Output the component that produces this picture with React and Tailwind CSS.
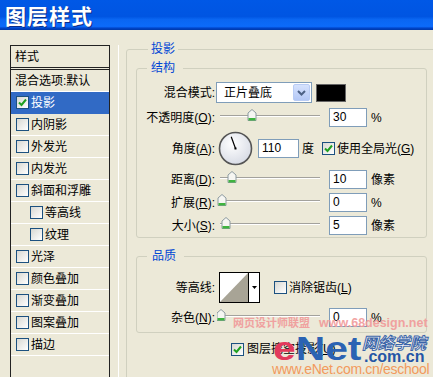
import React from "react";

function Check({ checked }) {
  return (
    <span className="inline-flex w-[13px] h-[13px] shrink-0 border border-[#1C5180] bg-[linear-gradient(135deg,#D8D8D2,#FFFFFF)] items-center justify-center">
      {checked && (
        <svg width="11" height="11" viewBox="0 0 11 11">
          <path d="M2 5.5 L4.5 8 L9 2.5" fill="none" stroke="#21A121" strokeWidth="2" />
        </svg>
      )}
    </span>
  );
}

function Slider({ pos }) {
  return (
    <svg width="104" height="19" viewBox="0 0 104 19" className="shrink-0">
      <line x1="3" y1="7.5" x2="103" y2="7.5" stroke="#A3A29D" strokeWidth="1" />
      <line x1="3" y1="8.5" x2="103" y2="8.5" stroke="#FFFFFF" strokeWidth="1" />
      <g transform={`translate(${pos - 4.5},1)`}>
        <path d="M0.5 4 L4.5 0.5 L8.5 4 V11.5 H0.5 Z" fill="#F6F6F2" stroke="#8C9AA0" />
        <rect x="1" y="9" width="7" height="2.5" fill="#3FB33F" />
      </g>
    </svg>
  );
}

function Input({ value, w = "w-[38px]" }) {
  return (
    <div className={`${w} h-[19px] shrink-0 border border-[#7F9DB9] bg-white pl-[3px] text-[12px] leading-[17px] text-black`}>
      {value}
    </div>
  );
}

function U({ children }) {
  return <span className="underline underline-offset-[1px]">{children}</span>;
}

function Label({ children }) {
  return <div className="w-[78px] shrink-0 text-right whitespace-nowrap">{children}</div>;
}

function Dial() {
  const a = (110 * Math.PI) / 180;
  const ex = 17.5 + 12.5 * Math.cos(a);
  const ey = 17.5 - 12.5 * Math.sin(a);
  return (
    <svg width="35" height="35" viewBox="0 0 35 35" className="shrink-0">
      <defs>
        <radialGradient id="dg" cx="40%" cy="35%" r="70%">
          <stop offset="0%" stopColor="#FFFFFF" />
          <stop offset="100%" stopColor="#D6DAE4" />
        </radialGradient>
      </defs>
      <circle cx="17.5" cy="17.5" r="16" fill="url(#dg)" stroke="#555" strokeWidth="1.6" />
      <line x1="17.5" y1="17.5" x2={ex} y2={ey} stroke="#000" strokeWidth="1.2" />
      <rect x="16.5" y="16.5" width="2" height="2" fill="#000" />
    </svg>
  );
}

const listItems = [
  { t: "投影", sel: true, c: true },
  { t: "内阴影" },
  { t: "外发光" },
  { t: "内发光" },
  { t: "斜面和浮雕" },
  { t: "等高线", sub: true },
  { t: "纹理", sub: true },
  { t: "光泽" },
  { t: "颜色叠加" },
  { t: "渐变叠加" },
  { t: "图案叠加" },
  { t: "描边" },
];

export default function App() {
  return (
    <div className="relative w-[433px] h-[377px] overflow-hidden bg-[#ECE9D8] text-[12px] leading-[16px] text-black font-['Liberation_Sans','Noto_Sans_CJK_SC',sans-serif]">
      {/* title bar */}
      <div className="h-[30px] bg-[linear-gradient(to_bottom,#0058E6_0%,#0055E2_55%,#0A66F2_65%,#0C6BFA_88%,#0044C8_94%,#0038A8_100%)] pl-[5px] flex items-center">
        <span className="text-white text-[21px] leading-[24px] font-bold tracking-[1px] font-['Noto_Sans_CJK_SC',sans-serif] [text-shadow:1px_1px_0_#0A2E8A]">
          图层样式
        </span>
      </div>

      <div className="flex pt-[11px] pl-[10px] h-[347px]">
        {/* left list */}
        <div className="mt-[4px] w-[100px] shrink-0 border-l border-r border-t border-[#222] flex flex-col">
          <div className="h-[22px] pl-[4px] flex items-center border-b border-[#222]">样式</div>
          <div className="h-[2px] border-b border-[#222]" />
          <div className="h-[22px] pl-[4px] flex items-center border-b border-white whitespace-nowrap">
            混合选项:默认
          </div>
          {listItems.map((it) => (
            <div
              key={it.t}
              className={`h-[22px] flex items-center border-b whitespace-nowrap ${
                it.sel ? "bg-[#316AC5] text-white border-[#316AC5]" : "border-white"
              } ${it.sub ? "pl-[19px]" : "pl-[5px]"}`}
            >
              <Check checked={it.c} />
              <span className="ml-[2px]">{it.t}</span>
            </div>
          ))}
        </div>

        {/* right side */}
        <div className="flex-1 flex">
          <div className="mt-[4px] w-[9px] shrink-0 border-r border-white" />
          <div className="pl-[7px]">
            <fieldset className="w-[320px] h-[350px] border border-[#D0D0BF] rounded-[3px] pl-[9px]">
              <legend className="ml-[12px] px-[3px] text-[#0046D5] leading-[16px]">投影</legend>

              <fieldset className="mt-[3px] w-[291px] border border-[#D0D0BF] rounded-[3px] pb-[2px]">
                <legend className="ml-[10px] pl-[4px] pr-[8px] text-[#0046D5] leading-[16px]">结构</legend>
                <div className="pt-[6px] flex flex-col">
                  {/* blend mode */}
                  <div className="flex items-center h-[21px]">
                    <Label>混合模式:</Label>
                    <div className="ml-[1px] w-[96px] h-[21px] border border-[#7F9DB9] bg-white flex items-center justify-between">
                      <span className="pl-[7px]">正片叠底</span>
                      <div className="w-[17px] h-[17px] mr-[1px] rounded-[2px] border border-[#B9CCF5] bg-[linear-gradient(to_bottom,#D6E2FD,#B4C8F6)] flex items-center justify-center">
                        <svg width="9" height="6" viewBox="0 0 9 6">
                          <path d="M1 1 L4.5 4.5 L8 1" fill="none" stroke="#4D6185" strokeWidth="2" />
                        </svg>
                      </div>
                    </div>
                    <div className="ml-[4px] w-[30px] h-[18px] bg-black border border-[#666]" />
                  </div>
                  {/* opacity */}
                  <div className="flex items-center h-[19px] mt-[5px]">
                    <Label>
                      不透明度(<U>O</U>):
                    </Label>
                    <div className="ml-[2px]"><Slider pos={35} /></div>
                    <div className="ml-[8px]"><Input value="30" /></div>
                    <span className="ml-[4px]">%</span>
                  </div>
                  {/* angle */}
                  <div className="flex items-center h-[35px] mt-[4px]">
                    <Label>
                      角度(<U>A</U>):
                    </Label>
                    <div className="ml-[3px]"><Dial /></div>
                    <div className="ml-[5px]"><Input value="110" w="w-[41px]" /></div>
                    <span className="ml-[3px]">度</span>
                    <div className="ml-[8px] flex items-center">
                      <Check checked />
                    </div>
                    <span className="ml-[2px] whitespace-nowrap">
                      使用全局光(<U>G</U>)
                    </span>
                  </div>
                  {/* distance */}
                  <div className="flex items-center h-[19px] mt-[4px]">
                    <Label>
                      距离(<U>D</U>):
                    </Label>
                    <div className="ml-[2px]"><Slider pos={15} /></div>
                    <div className="ml-[8px]"><Input value="10" /></div>
                    <span className="ml-[4px]">像素</span>
                  </div>
                  {/* spread */}
                  <div className="flex items-center h-[19px] mt-[4px]">
                    <Label>
                      扩展(<U>R</U>):
                    </Label>
                    <div className="ml-[2px]"><Slider pos={5} /></div>
                    <div className="ml-[8px]"><Input value="0" /></div>
                    <span className="ml-[4px]">%</span>
                  </div>
                  {/* size */}
                  <div className="flex items-center h-[19px] mt-[4px]">
                    <Label>
                      大小(<U>S</U>):
                    </Label>
                    <div className="ml-[2px]"><Slider pos={9} /></div>
                    <div className="ml-[8px]"><Input value="5" /></div>
                    <span className="ml-[4px]">像素</span>
                  </div>
                </div>
              </fieldset>

              <fieldset className="mt-[10px] w-[291px] border border-[#D0D0BF] rounded-[3px] pb-[5px]">
                <legend className="ml-[10px] pl-[5px] pr-[8px] text-[#0046D5] leading-[16px]">品质</legend>
                <div className="pt-[8px] flex flex-col">
                  <div className="flex items-center h-[31px]">
                    <Label>等高线:</Label>
                    <div className="ml-[4px] w-[41px] h-[31px] border border-black bg-white flex">
                      <svg width="28" height="29" viewBox="0 0 28 29" className="shrink-0">
                        <rect x="0" y="0" width="28" height="29" fill="#FFFFFF" />
                        <path d="M0 29 L28 0 L28 29 Z" fill="#A8A496" />
                      </svg>
                      <div className="flex-1 border-l border-black flex items-center justify-center">
                        <svg width="5" height="3" viewBox="0 0 5 3">
                          <path d="M0 0 H5 L2.5 3 Z" fill="#000" />
                        </svg>
                      </div>
                    </div>
                    <div className="ml-[14px] flex items-center">
                      <Check />
                    </div>
                    <span className="ml-[2px] whitespace-nowrap">
                      消除锯齿(<U>L</U>)
                    </span>
                  </div>
                  <div className="flex items-center h-[19px] mt-[5px]">
                    <Label>
                      杂色(<U>N</U>):
                    </Label>
                    <div className="ml-[2px]"><Slider pos={4} /></div>
                    <div className="ml-[8px]"><Input value="0" /></div>
                    <span className="ml-[4px]">%</span>
                  </div>
                </div>
              </fieldset>

              <div className="mt-[9px] ml-[95px] flex items-center h-[14px]">
                <Check checked />
                <span className="ml-[3px] whitespace-nowrap">
                  图层挖空投影(<U>U</U>)
                </span>
              </div>
            </fieldset>
          </div>
        </div>
      </div>

      {/* watermarks */}
      <div className="absolute left-[233px] top-[314px] flex items-baseline whitespace-nowrap text-[#F19A9A] font-bold opacity-90">
        <span className="text-[11px] leading-[16px] font-['Noto_Sans_CJK_SC',sans-serif]">网页设计师联盟</span>
        <span className="ml-[9px] text-[12.5px] leading-[16px] font-['Liberation_Sans',sans-serif]">www.68design.net</span>
      </div>
      <div className="absolute left-[273px] top-[331px] text-[34px] leading-[34px] font-bold font-['Liberation_Sans',sans-serif] scale-x-120 origin-left whitespace-nowrap">
        <span className="text-[#E23A5C]">e</span>
        <span className="text-[#2B63B3]">Net</span>
      </div>
      <div className="absolute left-[362px] top-[333px] text-[16px] leading-[18px] font-bold italic text-white [-webkit-text-stroke:1px_#3A64A8] font-['Noto_Sans_CJK_SC',serif] whitespace-nowrap">
        网络学院
      </div>
      <div className="absolute left-[364px] top-[348px] text-[16px] leading-[17px] font-bold text-[#2456A6] font-['Liberation_Sans',sans-serif] whitespace-nowrap">
        .com.cn
      </div>
      <div className="absolute left-[272px] top-[362px] text-[14px] leading-[14px] tracking-[-0.3px] text-[#F29A5C] font-['Liberation_Sans',sans-serif] whitespace-nowrap">
        www.eNet.com.cn/eschool
      </div>
    </div>
  );
}
